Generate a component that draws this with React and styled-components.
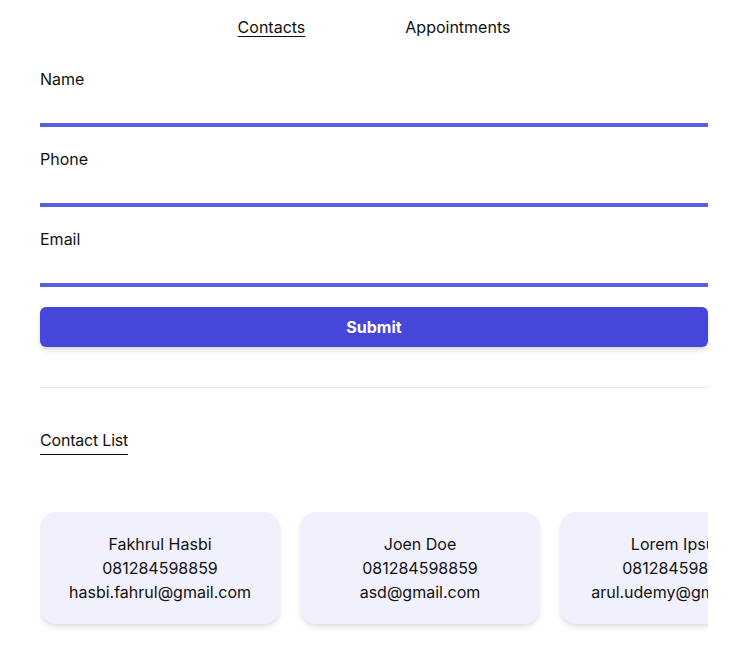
import React from "react";
import styled, { createGlobalStyle } from "styled-components";

const GlobalStyle = createGlobalStyle`
  body {
    margin: 0;
    background: #ffffff;
    font-family: Inter, "Noto Sans", "Liberation Sans", sans-serif;
    color: #111111;
  }
`;

const Page = styled.div`
  padding: 0 41px 0 40px;
`;

const Nav = styled.nav`
  display: flex;
  justify-content: center;
  gap: 100px;
  padding-top: 15px;
  font-size: 16px;
  line-height: 24px;
`;

const NavLink = styled.span`
  text-decoration: ${(p) => (p.active ? "underline" : "none")};
  text-underline-offset: 3px;
  cursor: pointer;
`;

const Form = styled.form`
  display: flex;
  flex-direction: column;
  margin-top: 28px;
`;

const Field = styled.label`
  display: flex;
  flex-direction: column;
  margin-bottom: 20px;
  font-size: 16px;
  line-height: 24px;
`;

const Input = styled.input`
  height: 32px;
  border: none;
  border-bottom: 4px solid #5b5fe6;
  outline: none;
  background: transparent;
  font: inherit;
  padding: 0;
`;

const SubmitButton = styled.button`
  height: 40px;
  border: none;
  border-radius: 6px;
  background: #4646db;
  color: #ffffff;
  font-family: inherit;
  font-size: 16px;
  font-weight: 700;
  box-shadow: 0 4px 6px -1px rgba(0, 0, 0, 0.12), 0 2px 4px -2px rgba(0, 0, 0, 0.1);
  cursor: pointer;
`;

const Divider = styled.hr`
  border: none;
  border-top: 1px solid #e4e4e7;
  margin: 40px 0 0;
`;

const ListTitle = styled.h2`
  display: inline-block;
  margin: 40px 0 0;
  font-size: 16px;
  font-weight: 400;
  line-height: 24px;
  letter-spacing: -0.2px;
  padding-bottom: 2px;
  border-bottom: 1px solid #111111;
`;

const CardRow = styled.div`
  display: flex;
  gap: 20px;
  overflow: hidden;
  margin-top: 57px;
  padding-bottom: 16px;
`;

const Card = styled.div`
  flex: 0 0 240px;
  box-sizing: border-box;
  padding: 20px 8px;
  border-radius: 16px;
  background: #f1f0fd;
  box-shadow: 0 4px 6px -1px rgba(0, 0, 0, 0.1), 0 2px 4px -2px rgba(0, 0, 0, 0.08);
  text-align: center;
  font-size: 16px;
  line-height: 24px;
  white-space: nowrap;
`;

const contacts = [
  { name: "Fakhrul Hasbi", phone: "081284598859", email: "hasbi.fahrul@gmail.com" },
  { name: "Joen Doe", phone: "081284598859", email: "asd@gmail.com" },
  { name: "Lorem Ipsum", phone: "081284598859", email: "arul.udemy@gmail.com" },
];

export default function App() {
  return (
    <>
      <GlobalStyle />
      <Page>
        <Nav>
          <NavLink active>Contacts</NavLink>
          <NavLink>Appointments</NavLink>
        </Nav>
        <Form onSubmit={(e) => e.preventDefault()}>
          <Field>
            Name
            <Input type="text" />
          </Field>
          <Field>
            Phone
            <Input type="text" />
          </Field>
          <Field>
            Email
            <Input type="email" />
          </Field>
          <SubmitButton type="submit">Submit</SubmitButton>
        </Form>
        <Divider />
        <ListTitle>Contact List</ListTitle>
        <CardRow>
          {contacts.map((c) => (
            <Card key={c.name}>
              <div>{c.name}</div>
              <div>{c.phone}</div>
              <div>{c.email}</div>
            </Card>
          ))}
        </CardRow>
      </Page>
    </>
  );
}
